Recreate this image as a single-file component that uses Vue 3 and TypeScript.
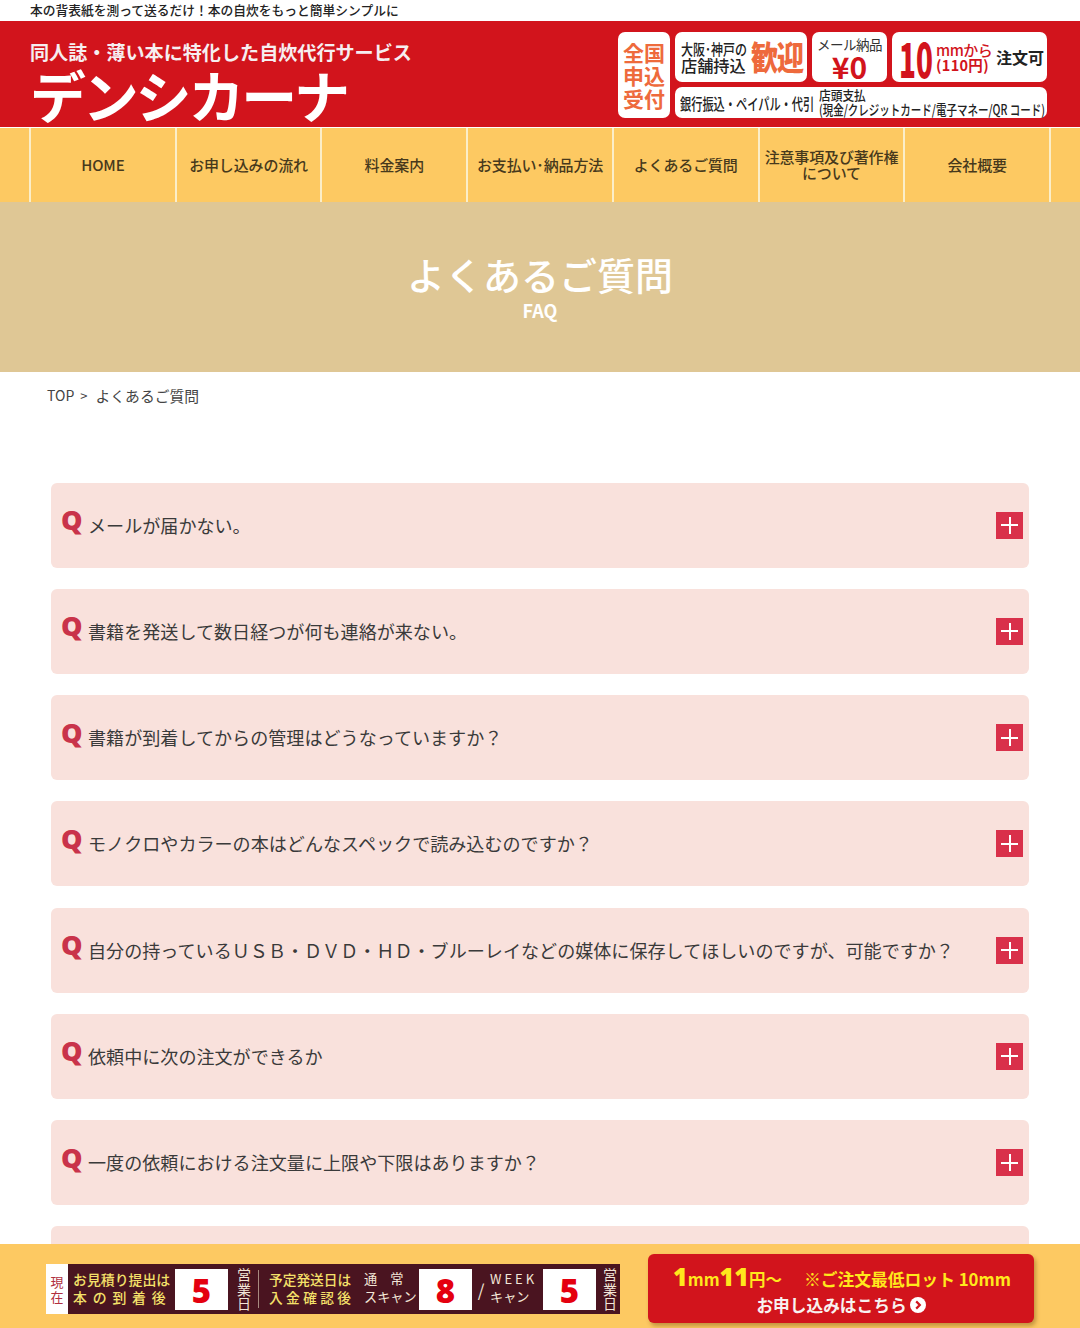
<script setup lang="ts">
const navItems = ['HOME', 'お申し込みの流れ', '料金案内', 'お支払い･納品方法', 'よくあるご質問', '注意事項及び著作権\nについて', '会社概要']

const faqs = [
  'メールが届かない。',
  '書籍を発送して数日経つが何も連絡が来ない。',
  '書籍が到着してからの管理はどうなっていますか？',
  'モノクロやカラーの本はどんなスペックで読み込むのですか？',
  '自分の持っているＵＳＢ・ＤＶＤ・ＨＤ・ブルーレイなどの媒体に保存してほしいのですが、可能ですか？',
  '依頼中に次の注文ができるか',
  '一度の依頼における注文量に上限や下限はありますか？',
  '', // 下のバーに隠れる行
]
</script>

<template>
  <div class="page">
    <p class="tagline">本の背表紙を測って送るだけ！本の自炊をもっと簡単シンプルに</p>

    <header class="header">
      <div class="brand">
        <p class="brand-sub">同人誌・薄い本に特化した自炊代行サービス</p>
        <p class="brand-name">デンシカーナ</p>
      </div>
      <div class="badges">
        <div class="badge badge-area">全国<br>申込<br>受付</div>
        <div class="badge-col">
          <div class="badge-row">
            <div class="badge badge-shop">
              <div class="shop-text">
                <span class="shop-l1">大阪･神戸の</span>
                <span class="shop-l2">店舗持込</span>
              </div>
              <span class="shop-big">歓迎</span>
            </div>
            <div class="badge badge-mail">
              <span class="mail-text">メール納品</span>
              <span class="mail-price">¥0</span>
            </div>
            <div class="badge badge-min">
              <span class="min-num">10</span>
              <div class="min-unit">
                <span class="min-l1">mmから</span>
                <span class="min-l2">(110円)</span>
              </div>
              <span class="min-ok">注文可</span>
            </div>
          </div>
          <div class="badge badge-pay">
            <span class="pay-left">銀行振込・ペイパル・代引</span>
            <div class="pay-right">
              <span class="pay-r1">店頭支払</span>
              <span class="pay-r2">(現金/クレジットカード/電子マネー/QR コード)</span>
            </div>
          </div>
        </div>
      </div>
    </header>

    <nav class="nav">
      <a v-for="item in navItems" :key="item" class="nav-item">{{ item }}</a>
    </nav>

    <section class="hero">
      <h1>よくあるご質問</h1>
      <p>FAQ</p>
    </section>

    <div class="crumbs">
      <span>TOP</span>
      <span class="crumb-sep">&gt;</span>
      <span class="crumb-cur">よくあるご質問</span>
    </div>

    <main class="faq">
      <div v-for="q in faqs" :key="q" class="faq-item">
        <template v-if="q">
          <span class="faq-q">Q</span>
          <span class="faq-text">{{ q }}</span>
          <span class="faq-plus"></span>
        </template>
      </div>
    </main>

    <footer class="bar">
      <div class="status">
        <div class="now">現<br>在</div>
        <div class="st-label">お見積り提出は<br><span class="spread">本の到着後</span></div>
        <div class="st-num">5</div>
        <div class="st-days">営<br>業<br>日</div>
        <div class="st-line"></div>
        <div class="st-label st-label2">予定発送日は<br><span class="spread">入金確認後</span></div>
        <div class="st-kind">通　常<br>スキャン</div>
        <div class="st-num">8</div>
        <div class="st-slash">/</div>
        <div class="st-kind st-week"><span class="week">WEEK</span><br>キャン</div>
        <div class="st-num">5</div>
        <div class="st-days st-days-last">営<br>業<br>日</div>
      </div>
      <a class="cta">
        <span class="cta-top"><b>1</b><i>mm</i><b>11</b><i>円～</i><em>※ご注文最低ロット 10mm</em></span>
        <span class="cta-bottom">お申し込みはこちら
          <svg width="16" height="16" viewBox="0 0 16 16"><circle cx="8" cy="8" r="8" fill="#fff" /><path d="M6.2 4.4 9.8 8l-3.6 3.6" fill="none" stroke="#d2141c" stroke-width="2.2" /></svg>
        </span>
      </a>
    </footer>
  </div>
</template>

<style>
html,
body {
  margin: 0;
  background: #fff;
}
</style>

<style scoped>
.page {
  height: 1328px;
  overflow: hidden;
  font-family: "Noto Sans CJK JP", "Noto Sans", sans-serif;
  color: #333;
}

p {
  margin: 0;
}

.tagline {
  height: 21px;
  padding-left: 30px;
  font-size: 12.75px;
  line-height: 20px;
  font-weight: 500;
  color: #222;
}

.header {
  height: 106px;
  padding: 0 33px 0 30px;
  display: flex;
  justify-content: space-between;
  background: #d2141c;
}

.brand-sub {
  margin-top: 18px;
  font-size: 19.1px;
  line-height: 26px;
  font-weight: 700;
  color: #f6eef0;
}

.brand-name {
  margin-top: -1px;
  font-size: 56px;
  line-height: 60px;
  font-weight: 700;
  letter-spacing: -3.2px;
  color: #fff;
}

.badges {
  display: flex;
  gap: 5px;
  margin-top: 11px;
  height: 86px;
}

.badge {
  background: #fff;
  border-radius: 7px;
  box-sizing: border-box;
}

.badge-area {
  width: 52px;
  text-align: center;
  padding-top: 9px;
  font-size: 21px;
  line-height: 23px;
  font-weight: 700;
  color: #ee6a3c;
}

.badge-col {
  display: flex;
  flex-direction: column;
  gap: 5px;
  width: 372px;
}

.badge-row {
  display: flex;
  gap: 5px;
  height: 50px;
}

.badge-shop {
  width: 132px;
  display: flex;
  align-items: center;
  padding-left: 6px;
}

.shop-text {
  width: 70px;
  flex-shrink: 0;
  color: #222;
  white-space: nowrap;
}

.shop-l1,
.shop-l2 {
  display: block;
  font-weight: 500;
  transform-origin: left center;
}

.shop-l1 {
  font-size: 15px;
  line-height: 17px;
  transform: scaleX(0.8);
}

.shop-l2 {
  font-size: 16.2px;
  line-height: 17px;
}

.shop-big {
  width: 54px;
  font-size: 27px;
  line-height: 40px;
  font-weight: 900;
  letter-spacing: -1px;
  color: #ee6a3c;
  white-space: nowrap;
  transform: scaleY(1.2);
}

.badge-mail {
  width: 75px;
  text-align: center;
  white-space: nowrap;
}

.mail-text {
  display: block;
  margin-top: 3px;
  font-size: 13.5px;
  line-height: 18px;
  letter-spacing: -0.5px;
  color: #333;
}

.mail-price {
  display: block;
  font-size: 30px;
  line-height: 26px;
  font-weight: 700;
  color: #d2141c;
}

.badge-min {
  flex: 1;
  display: flex;
  align-items: center;
  padding-left: 7px;
  white-space: nowrap;
}

.min-num {
  width: 37px;
  flex-shrink: 0;
  font-size: 48px;
  line-height: 50px;
  font-weight: 900;
  color: #d2141c;
  transform: scaleX(0.58);
  transform-origin: left center;
}

.min-unit {
  width: 60px;
  flex-shrink: 0;
  color: #d2141c;
}

.min-l1,
.min-l2 {
  display: block;
  line-height: 15px;
}

.min-l1 {
  font-size: 15px;
  font-weight: 500;
  letter-spacing: -0.5px;
}

.min-l2 {
  font-size: 14.5px;
  font-weight: 700;
  letter-spacing: 0.3px;
}

.min-ok {
  font-size: 16px;
  font-weight: 700;
  color: #222;
}

.badge-pay {
  height: 31px;
  display: flex;
  align-items: center;
  padding-left: 5px;
  white-space: nowrap;
  color: #222;
}

.pay-left {
  width: 139px;
  flex-shrink: 0;
  font-size: 16px;
  font-weight: 500;
  transform: scaleX(0.7);
  transform-origin: left center;
}

.pay-right {
  width: 227px;
  flex-shrink: 0;
  margin-top: -2px;
}

.pay-r1,
.pay-r2 {
  display: block;
  width: 227px;
  line-height: 14px;
  font-weight: 500;
  transform-origin: left center;
}

.pay-r1 {
  font-size: 13px;
  transform: scaleX(0.9);
}

.pay-r2 {
  font-size: 14px;
  transform: scaleX(0.75);
}

.nav {
  height: 74px;
  margin-top: 1px;
  padding: 0 29px;
  display: flex;
  background: #fdc962;
}

.nav-item {
  flex: 1;
  display: flex;
  align-items: center;
  justify-content: center;
  border-left: 2px solid #fbeec9;
  font-size: 15px;
  line-height: 16px;
  font-weight: 500;
  letter-spacing: -0.15px;
  text-align: center;
  white-space: pre-line;
  color: #47391c;
}

.nav-item:last-child {
  border-right: 2px solid #fbeec9;
}

.hero {
  height: 170px;
  display: flex;
  flex-direction: column;
  align-items: center;
  background: #dfc795;
  color: #fff;
}

.hero h1 {
  margin: 48px 0 0;
  font-size: 38px;
  line-height: 48px;
  font-weight: 500;
}

.hero p {
  margin-top: 1px;
  font-size: 18px;
  line-height: 22px;
  font-weight: 700;
}

.crumbs {
  height: 46px;
  padding: 0 0 2px 47px;
  display: flex;
  align-items: center;
  font-size: 14px;
  font-weight: 400;
  color: #444;
}

.crumb-sep {
  margin: 0 8px 0 6px;
  font-size: 13px;
}

.crumb-cur {
  font-size: 14.8px;
}

.faq {
  padding: 62.6px 51px 0;
  display: flex;
  flex-direction: column;
  gap: 21.25px;
}

.faq-item {
  height: 85px;
  flex-shrink: 0;
  padding: 0 6px 0 10px;
  display: flex;
  align-items: center;
  background: #f9e1dc;
  border-radius: 6px;
}

.faq-q {
  width: 27px;
  margin-top: -11px;
  font-family: "Open Sans", sans-serif;
  font-size: 27px;
  font-weight: 800;
  color: #c9334a;
}

.faq-text {
  flex: 1;
  margin-top: -1px;
  font-size: 18.08px;
  font-weight: 400;
  color: #3a3a3a;
}

.faq-plus {
  position: relative;
  width: 27px;
  height: 27px;
  background: #d9304a;
}

.faq-plus::before,
.faq-plus::after {
  content: "";
  position: absolute;
  background: #fff;
}

.faq-plus::before {
  left: 5px;
  right: 5px;
  top: 12.5px;
  height: 2px;
}

.faq-plus::after {
  top: 5px;
  bottom: 5px;
  left: 12.5px;
  width: 2px;
}

.bar {
  position: fixed;
  left: 0;
  right: 0;
  bottom: 0;
  height: 84px;
  padding-left: 46px;
  display: flex;
  gap: 28px;
  background: #fdc962;
}

.status {
  margin-top: 20px;
  width: 574px;
  height: 50px;
  box-sizing: border-box;
  display: flex;
  align-items: center;
  background: #4a1420;
  white-space: nowrap;
}

.now {
  width: 22px;
  height: 100%;
  flex-shrink: 0;
  display: flex;
  align-items: center;
  justify-content: center;
  text-align: center;
  background: #fff;
  font-size: 13px;
  line-height: 15px;
  color: #b03040;
}

.st-label {
  width: 102px;
  margin: -2px 0 0 5px;
  font-size: 13.9px;
  line-height: 18px;
  font-weight: 500;
  color: #f5e16a;
}

.st-label2 {
  width: 95px;
  margin-left: 10px;
  font-size: 13.7px;
}

.spread {
  letter-spacing: 5.8px;
}

.st-label2 .spread {
  letter-spacing: 3.4px;
}

.st-num {
  width: 53px;
  height: 41px;
  flex-shrink: 0;
  background: #fff;
  text-align: center;
  font-family: "Open Sans", sans-serif;
  font-size: 33px;
  line-height: 44px;
  font-weight: 800;
  color: #e4000f;
}

.st-days {
  width: 14px;
  margin-left: 9px;
  font-size: 14px;
  line-height: 14.5px;
  text-align: center;
  color: #f3e7d8;
}

.st-days-last {
  margin-left: 7px;
}

.st-line {
  width: 1px;
  height: 38px;
  margin-left: 7px;
  background: #a88a80;
}

.st-kind {
  width: 55px;
  margin-top: -2px;
  font-size: 13.2px;
  line-height: 18px;
  color: #f3e7d8;
}

.st-slash {
  width: 18px;
  text-align: center;
  font-size: 17px;
  color: #f3e7d8;
}

.st-week {
  width: 53px;
}

.week {
  letter-spacing: 3px;
  font-size: 13px;
}

.cta {
  margin-top: 10px;
  width: 386px;
  height: 69px;
  display: flex;
  flex-direction: column;
  align-items: center;
  background: #d2141c;
  border-radius: 6px;
  box-shadow: 2px 3px 4px rgba(120, 80, 20, 0.45);
  white-space: nowrap;
}

.cta-top {
  margin: 7px 0 0 2px;
  height: 30px;
  display: flex;
  align-items: baseline;
  line-height: 30px;
  color: #ffe81c;
  font-weight: 700;
}

.cta-top b {
  font-size: 25px;
  font-weight: 900;
  font-family: "Open Sans", sans-serif;
}

.cta-top i {
  font-style: normal;
  font-size: 16.5px;
}

.cta-top em {
  margin-left: 22px;
  font-style: normal;
  font-size: 16.8px;
}

.cta-bottom {
  margin-top: 2px;
  display: flex;
  align-items: center;
  gap: 3px;
  height: 24px;
  font-size: 16.7px;
  font-weight: 700;
  color: #f8f2f0;
}
</style>
